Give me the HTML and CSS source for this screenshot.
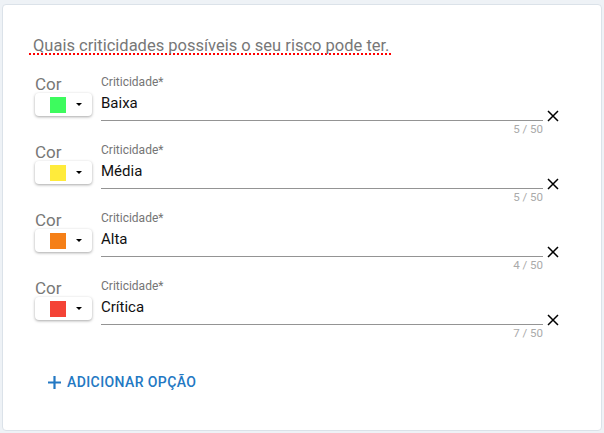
FILE: index.html
```html
<!DOCTYPE html>
<html lang="pt-BR">
<head>
    <meta charset="UTF-8">
    <meta name="viewport" content="width=device-width, initial-scale=1.0">
    <link rel="stylesheet" href="styles.css">
</head>
<body>
    <div class="card">
        <div class="question">
            <span class="question-text">Quais criticidades possíveis o seu risco pode ter.</span>
        </div>

        <div class="options">
            <div class="option">
                <div class="color-col">
                    <span class="color-label">Cor</span>
                    <button class="color-picker"><span class="swatch green"></span><span class="caret"></span></button>
                </div>
                <div class="field">
                    <label class="field-label">Criticidade*</label>
                    <div class="field-input">Baixa</div>
                    <div class="field-count">5 / 50</div>
                </div>
                <button class="remove">
                    <svg width="12" height="12" viewBox="0 0 12 12"><path d="M1 1L11 11M11 1L1 11" stroke="#000" stroke-width="1.5"/></svg>
                </button>
            </div>

            <div class="option">
                <div class="color-col">
                    <span class="color-label">Cor</span>
                    <button class="color-picker"><span class="swatch yellow"></span><span class="caret"></span></button>
                </div>
                <div class="field">
                    <label class="field-label">Criticidade*</label>
                    <div class="field-input">Média</div>
                    <div class="field-count">5 / 50</div>
                </div>
                <button class="remove">
                    <svg width="12" height="12" viewBox="0 0 12 12"><path d="M1 1L11 11M11 1L1 11" stroke="#000" stroke-width="1.5"/></svg>
                </button>
            </div>

            <div class="option">
                <div class="color-col">
                    <span class="color-label">Cor</span>
                    <button class="color-picker"><span class="swatch orange"></span><span class="caret"></span></button>
                </div>
                <div class="field">
                    <label class="field-label">Criticidade*</label>
                    <div class="field-input">Alta</div>
                    <div class="field-count">4 / 50</div>
                </div>
                <button class="remove">
                    <svg width="12" height="12" viewBox="0 0 12 12"><path d="M1 1L11 11M11 1L1 11" stroke="#000" stroke-width="1.5"/></svg>
                </button>
            </div>

            <div class="option">
                <div class="color-col">
                    <span class="color-label">Cor</span>
                    <button class="color-picker"><span class="swatch red"></span><span class="caret"></span></button>
                </div>
                <div class="field">
                    <label class="field-label">Criticidade*</label>
                    <div class="field-input">Crítica</div>
                    <div class="field-count">7 / 50</div>
                </div>
                <button class="remove">
                    <svg width="12" height="12" viewBox="0 0 12 12"><path d="M1 1L11 11M11 1L1 11" stroke="#000" stroke-width="1.5"/></svg>
                </button>
            </div>
        </div>

        <!-- Add option -->
        <button class="add-option">
            <svg width="15" height="15" viewBox="0 0 15 15"><path d="M7.5 1V14M1 7.5H14" stroke="#2378c3" stroke-width="2.2"/></svg>
            <span>ADICIONAR OPÇÃO</span>
        </button>
    </div>
</body>
</html>
```

FILE: styles.css
```css
body {
    margin: 0;
    padding: 4px 2px 2px 2px;
    background-color: #eef2f6;
    font-family: Roboto, "Liberation Sans", sans-serif;
}

.card {
    box-sizing: border-box;
    height: 427px;
    background-color: #fff;
    border: 1px solid #dbe2e9;
    border-radius: 4px;
    padding: 31px 0 0 26px;
}

.question {
    height: 24px;
    margin-bottom: 15px;
}

.question-text {
    display: inline-block;
    padding: 0 4px 0 4px;
    font-size: 16.5px;
    line-height: 19px;
    color: #777;
    background: linear-gradient(to right, #f00 50%, transparent 50%) left bottom / 4px 2px repeat-x;
}

.option {
    display: flex;
    height: 68px;
}

.color-col {
    width: 66px;
    padding-left: 6px;
    display: flex;
    flex-direction: column;
    align-items: flex-start;
}

.color-label {
    font-size: 17px;
    line-height: 18px;
    color: #777;
}

.color-picker {
    display: flex;
    align-items: center;
    width: 57px;
    height: 23px;
    padding: 0 0 0 15px;
    background-color: #fff;
    border: none;
    border-radius: 4px;
    box-shadow: 0 1px 3px rgba(0, 0, 0, 0.35);
    cursor: pointer;
}

.swatch {
    width: 16px;
    height: 16px;
}

.swatch.green { background-color: #3dfb5e; }
.swatch.yellow { background-color: #ffeb3b; }
.swatch.orange { background-color: #f57f17; }
.swatch.red { background-color: #f44336; }

.caret {
    margin-left: 10px;
    border-left: 3px solid transparent;
    border-right: 3px solid transparent;
    border-top: 3px solid #000;
}

.field {
    width: 442px;
    display: flex;
    flex-direction: column;
}

.field-label {
    font-size: 12px;
    line-height: 14px;
    color: #757575;
}

.field-input {
    height: 32px;
    box-sizing: border-box;
    padding-top: 5px;
    font-size: 15px;
    line-height: 18px;
    color: #111;
    border-bottom: 1px solid #949494;
    margin-bottom: 2px;
}

.field-count {
    text-align: right;
    font-size: 11.5px;
    line-height: 13px;
    color: #aaa;
}

.remove {
    margin: 35px 0 0 4px;
    padding: 0;
    width: 12px;
    height: 12px;
    background: none;
    border: none;
    cursor: pointer;
    display: flex;
}

.add-option {
    display: flex;
    align-items: center;
    gap: 5px;
    margin: 27px 0 0 18px;
    padding: 0;
    background: none;
    border: none;
    font-family: Roboto, "Liberation Sans", sans-serif;
    font-size: 14px;
    font-weight: 500;
    letter-spacing: 0.4px;
    color: #2378c3;
    cursor: pointer;
}
```
